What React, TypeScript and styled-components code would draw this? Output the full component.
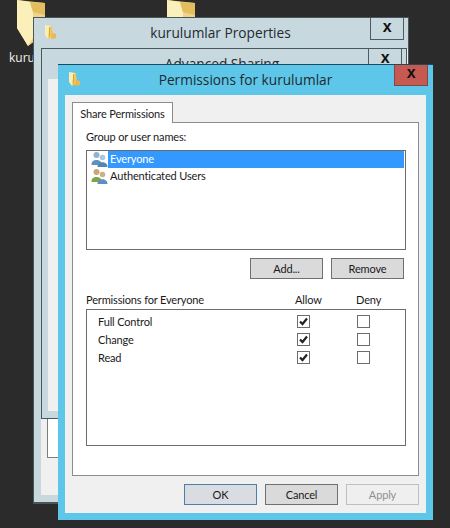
import styled, { createGlobalStyle } from "styled-components"

const GlobalStyle = createGlobalStyle`
  html, body {
    margin: 0;
    padding: 0;
    background: #2b2b2b;
  }
  * {
    box-sizing: border-box;
  }
`

function FolderIcon() {
  return (
    <svg width="13" height="15" viewBox="0 0 13 15">
      <path d="M1 0 L7 1 L7 11 L4 14 L1 10 Z" fill="#fbeeb0" />
      <path d="M7 1 L8 1 L9 11 L4 14 L5 5 Z" fill="#f0c75e" />
      <path d="M8 8 L12 9 L12 13 L7 14 Z" fill="#e8b94f" />
      <path d="M5 2 L6 2 L6 10 L5 12 Z" fill="#d9a23c" />
    </svg>
  )
}

function DesktopFolder() {
  return (
    <svg width="30" height="47" viewBox="0 0 30 47">
      <path d="M1 0 L29 3 L29 34 L12 46 L1 28 Z" fill="#f1d27a" />
      <path d="M1 0 L14 2 L17 12 L17 38 L12 46 L1 28 Z" fill="#fbf0b9" />
      <path d="M17 12 L29 15 L29 34 L17 38 Z" fill="#efd486" />
      <path d="M14 2 L29 3 L29 15 L17 12 Z" fill="#e3bd5e" />
    </svg>
  )
}

function UsersIcon({ tint }: { tint: "blue" | "green" }) {
  const isBlue = tint === "blue"
  return (
    <svg width="17" height="17" viewBox="0 0 17 17">
      <circle cx="5.5" cy="4" r="3" fill={isBlue ? "#8fb4cf" : "#c9a878"} />
      <path d="M0.5 13 C0.5 7.5 10.5 7.5 10.5 13 L10.5 14 L0.5 14 Z" fill={isBlue ? "#5f93ba" : "#7fa548"} />
      <circle cx="11.5" cy="6.5" r="2.8" fill={isBlue ? "#a9c6dc" : "#cbb08a"} />
      <path d="M6.5 16 C6.5 9.8 16.5 9.8 16.5 16 Z" fill={isBlue ? "#4f86b3" : "#5e8fbe"} />
    </svg>
  )
}

function CheckMark() {
  return (
    <svg width="11" height="11" viewBox="0 0 11 11">
      <path d="M2 5.5 L4.5 8 L9 2.5" fill="none" stroke="#222" strokeWidth="2.2" />
    </svg>
  )
}

const permissions = ["Full Control", "Change", "Read"]

export default function App() {
  return (
    <Desktop>
      <GlobalStyle />
      <DesktopIcon $left={16}>
        <DesktopFolder />
        <IconLabel>kurulumlar</IconLabel>
      </DesktopIcon>
      <DesktopIcon $left={166}>
        <DesktopFolder />
      </DesktopIcon>

      <PropertiesWindow>
        <TitleBar $height={31} $shift={8}>
          <TitleIcon><FolderIcon /></TitleIcon>
          <Title>kurulumlar Properties</Title>
          <CloseButton>x</CloseButton>
        </TitleBar>
        <BackClient>
          <BackPanel />
        </BackClient>
      </PropertiesWindow>

      <SharingWindow>
        <TitleBar $height={30} $shift={10}>
          <Title>Advanced Sharing</Title>
          <CloseButton>x</CloseButton>
        </TitleBar>
        <SharingClient />
      </SharingWindow>

      <MainWindow>
        <TitleBar $height={30} $shift={0}>
          <TitleIcon><FolderIcon /></TitleIcon>
          <Title>Permissions for kurulumlar</Title>
          <RedClose>x</RedClose>
        </TitleBar>
        <Client>
          <TabStrip>
            <Tab>Share Permissions</Tab>
          </TabStrip>
          <Pane>
            <Label>Group or user names:</Label>
            <UserList>
              <UserRow>
                <UsersIcon tint="blue" />
                <UserName $selected>Everyone</UserName>
              </UserRow>
              <UserRow>
                <UsersIcon tint="green" />
                <UserName>Authenticated Users</UserName>
              </UserRow>
            </UserList>
            <ListButtons>
              <Button>Add...</Button>
              <Button>Remove</Button>
            </ListButtons>
            <PermissionHeader>
              <span>Permissions for Everyone</span>
              <span>Allow</span>
              <span>Deny</span>
            </PermissionHeader>
            <PermissionList>
              {permissions.map((name) => (
                <PermissionRow key={name}>
                  <span>{name}</span>
                  <CheckBox><CheckMark /></CheckBox>
                  <CheckBox />
                </PermissionRow>
              ))}
            </PermissionList>
          </Pane>
          <Footer>
            <Button $primary>OK</Button>
            <Button>Cancel</Button>
            <Button $disabled>Apply</Button>
          </Footer>
        </Client>
      </MainWindow>
    </Desktop>
  )
}

const Desktop = styled.div`
  position: relative;
  width: 450px;
  height: 528px;
  overflow: hidden;
  background: #2b2b2b;
  font-family: Lato, "Open Sans", sans-serif;
  font-size: 11px;
  letter-spacing: -0.15px;
  color: #1a1a1a;
`

const DesktopIcon = styled.div<{ $left: number }>`
  position: absolute;
  left: ${(p) => p.$left}px;
  top: 0;
  width: 60px;
  display: flex;
  flex-direction: column;
  align-items: flex-start;
`

const IconLabel = styled.div`
  margin: 2px 0 0 -7px;
  color: #f2f2f2;
  font-family: "Open Sans", sans-serif;
  font-size: 12px;
  letter-spacing: 0;
  white-space: nowrap;
`

const PropertiesWindow = styled.div`
  position: absolute;
  left: 33px;
  top: 17px;
  width: 376px;
  height: 487px;
  display: flex;
  flex-direction: column;
  padding: 0 0 7px 7px;
  background: #c7d8df;
  border: 1px solid #4a5659;
  border-bottom-width: 2px;
`

const TitleBar = styled.div<{ $height: number; $shift: number }>`
  position: relative;
  flex: none;
  height: ${(p) => p.$height}px;
  display: flex;
  align-items: center;
  justify-content: center;
  padding: 0 ${(p) => p.$shift}px 2px 0;
`

const TitleIcon = styled.div`
  position: absolute;
  left: 3px;
  top: 7px;
  line-height: 0;
`

const Title = styled.div`
  font-family: "Open Sans", sans-serif;
  font-size: 13.7px;
  letter-spacing: 0;
  color: #1f2a30;
`

const CloseButton = styled.div`
  position: absolute;
  right: 4px;
  top: 0;
  width: 34px;
  height: 22px;
  display: flex;
  align-items: center;
  justify-content: center;
  padding-bottom: 4px;
  border: 1px solid #4f5b60;
  border-top: none;
  font-family: "Liberation Sans", sans-serif;
  font-size: 16px;
  font-weight: 700;
  color: #111;
`

const BackClient = styled.div`
  flex: 1;
  background: #f0f0f0;
  display: flex;
  align-items: flex-end;
  padding: 0 0 37px 6px;
`

const BackPanel = styled.div`
  width: 100%;
  height: 43px;
  background: #fff;
  border: 1px solid #7c7c7c;
`

const SharingWindow = styled.div`
  position: absolute;
  left: 41px;
  top: 48px;
  width: 366px;
  height: 371px;
  display: flex;
  flex-direction: column;
  padding: 0 0 7px 6px;
  background: #c7d8df;
  border: 1px solid #4a5659;
`

const SharingClient = styled.div`
  flex: 1;
  background: #f0f0f0;
`

const MainWindow = styled.div`
  position: absolute;
  left: 58px;
  top: 64px;
  width: 375px;
  height: 456px;
  display: flex;
  flex-direction: column;
  padding: 0 7px 7px 7px;
  background: #5ec6e8;
  border-top: 1px solid #1d4a60;
`

const RedClose = styled.div`
  position: absolute;
  right: -2px;
  top: 0;
  width: 34px;
  height: 21px;
  display: flex;
  align-items: center;
  justify-content: center;
  padding-bottom: 4px;
  background: #c75a50;
  border: 1px solid #7a4a48;
  border-top: none;
  font-family: "Liberation Sans", sans-serif;
  font-size: 16px;
  font-weight: 700;
  color: #111;
`

const Client = styled.div`
  flex: 1;
  display: flex;
  flex-direction: column;
  padding: 7px;
  background: #f0f0f0;
`

const TabStrip = styled.div`
  flex: none;
  height: 20px;
  display: flex;
  position: relative;
  z-index: 1;
`

const Tab = styled.div`
  width: 101px;
  height: 21px;
  display: flex;
  align-items: center;
  justify-content: center;
  background: #fff;
  border: 1px solid #8c8c8c;
  border-bottom: none;
`

const Pane = styled.div`
  height: 354px;
  display: flex;
  flex-direction: column;
  padding: 6px 12px 0 13px;
  background: #fff;
  border: 1px solid #8c8c8c;
`

const Label = styled.div`
  height: 21px;
  line-height: 16px;
`

const UserList = styled.div`
  height: 100px;
  padding: 0 1px 0 4px;
  border: 1px solid #6c6c6c;
`

const UserRow = styled.div`
  height: 17px;
  display: flex;
  align-items: center;
`

const UserName = styled.div<{ $selected?: boolean }>`
  flex: 1;
  height: 17px;
  line-height: 15px;
  padding-left: 2px;
  background: ${(p) => (p.$selected ? "#3399ff" : "transparent")};
  color: ${(p) => (p.$selected ? "#fff" : "#1a1a1a")};
`

const ListButtons = styled.div`
  display: flex;
  justify-content: flex-end;
  gap: 8px;
  margin-top: 8px;
  padding-right: 2px;
`

const Button = styled.div<{ $primary?: boolean; $disabled?: boolean }>`
  width: 73px;
  height: 21px;
  display: flex;
  align-items: center;
  justify-content: center;
  background: ${(p) => (p.$disabled ? "#efefef" : p.$primary ? "#d9dde2" : "#dadada")};
  border: 1px solid ${(p) => (p.$disabled ? "#bfbfbf" : p.$primary ? "#4f7ea8" : "#707070")};
  color: ${(p) => (p.$disabled ? "#8f8f8f" : "#1a1a1a")};
`

const PermissionHeader = styled.div`
  display: grid;
  grid-template-columns: 209px 61px auto;
  height: 30px;
  align-items: end;
  padding-bottom: 3px;
`

const PermissionList = styled.div`
  height: 137px;
  padding: 2px 0 0 11px;
  border: 1px solid #6c6c6c;
`

const PermissionRow = styled.div`
  display: grid;
  grid-template-columns: 199px 60px 13px;
  height: 18px;
  align-items: center;
`

const CheckBox = styled.div`
  width: 13px;
  height: 13px;
  display: flex;
  align-items: center;
  justify-content: center;
  background: #fff;
  border: 1px solid #6c6c6c;
`

const Footer = styled.div`
  flex: none;
  display: flex;
  justify-content: flex-end;
  gap: 8px;
  margin-top: 8px;
`
